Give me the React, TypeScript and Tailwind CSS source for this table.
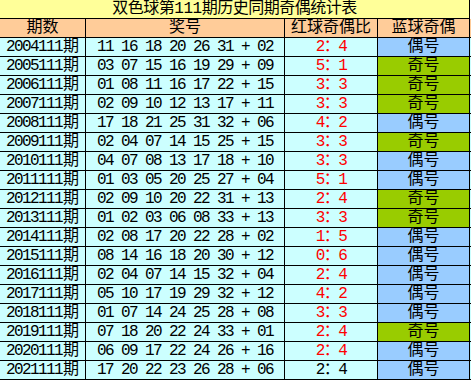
const rows: [string, string, string, boolean][] = [
  ['2004111', '11 16 18 20 26 31 + 02', '2：4', false],
  ['2005111', '03 07 15 16 19 29 + 09', '5：1', true],
  ['2006111', '01 08 11 16 17 22 + 15', '3：3', true],
  ['2007111', '02 09 10 12 13 17 + 11', '3：3', true],
  ['2008111', '17 18 21 25 31 32 + 06', '4：2', false],
  ['2009111', '02 04 07 14 15 25 + 15', '3：3', true],
  ['2010111', '04 07 08 13 17 18 + 10', '3：3', false],
  ['2011111', '01 03 05 20 25 27 + 04', '5：1', false],
  ['2012111', '02 09 10 20 22 31 + 13', '2：4', true],
  ['2013111', '01 02 03 06 08 33 + 13', '3：3', true],
  ['2014111', '02 08 17 20 22 28 + 02', '1：5', false],
  ['2015111', '08 14 16 18 20 30 + 12', '0：6', false],
  ['2016111', '02 04 07 14 15 32 + 04', '2：4', false],
  ['2017111', '05 10 17 19 29 32 + 12', '4：2', false],
  ['2018111', '01 07 14 24 25 28 + 08', '3：3', false],
  ['2019111', '07 18 20 22 24 33 + 01', '2：4', true],
  ['2020111', '06 09 17 22 24 26 + 16', '2：4', false],
  ['2021111', '17 20 22 23 26 28 + 06', '2：4', false],
];

const font = { fontFamily: '"Liberation Mono", "Noto Sans CJK SC", monospace' };

export default function App() {
  return (
    <div className="w-[471px] h-[381px] bg-white text-black text-[16px] leading-[18px]" style={font}>
      {/* Title */}
      <div className="w-[470px] h-[19px] flex items-center justify-center bg-[#ffff99] border-b border-r border-black tracking-[-0.5px] whitespace-pre">
        双色球第111期历史同期奇偶统计表
      </div>

      {/* Header */}
      <div className="flex h-[19px] bg-[#ffcc99] border-b border-black">
        <div className="w-[86px] flex items-center justify-center border-r border-black">期数</div>
        <div className="w-[199px] flex items-center justify-center border-r border-black">奖号</div>
        <div className="w-[93px] flex items-center justify-center border-r border-black">红球奇偶比</div>
        <div className="w-[92px] flex items-center justify-center border-r border-black">蓝球奇偶</div>
      </div>

      {rows.map(([period, nums, ratio, odd], i) => (
        <div key={period} className="flex h-[19px] bg-[#ccffff] border-b border-black">
          <div className="w-[86px] flex items-center justify-center border-r border-black whitespace-pre">
            <span className="tracking-[-1.6px] mr-[1px]">{period}</span>
            <span>期</span>
          </div>
          <div className="w-[199px] flex items-center justify-center border-r border-black tracking-[-1.6px] whitespace-pre">
            {nums}
          </div>
          <div
            className={
              'w-[93px] flex items-center justify-center border-r border-black tracking-[-1.6px] whitespace-pre ' +
              (i === rows.length - 1 ? 'text-black' : 'text-[#ff0000]')
            }
          >
            {ratio}
          </div>
          <div
            className={
              'w-[92px] flex items-center justify-center border-r border-black ' +
              (odd ? 'bg-[#99cc00]' : 'bg-[#99ccff]')
            }
          >
            {odd ? '奇号' : '偶号'}
          </div>
        </div>
      ))}
    </div>
  );
}
